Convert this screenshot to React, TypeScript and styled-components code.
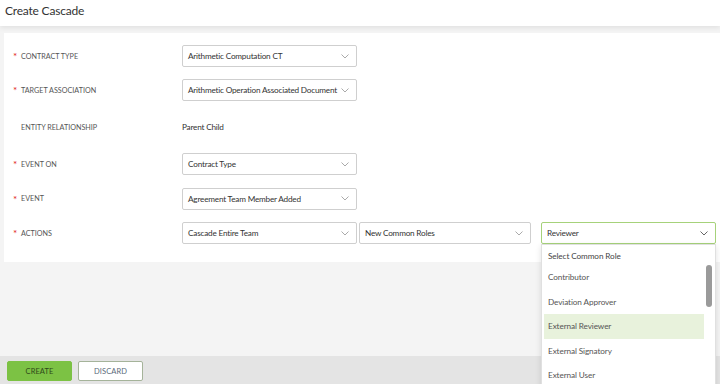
import styled, { createGlobalStyle } from "styled-components";

const GlobalStyle = createGlobalStyle`
  html, body {
    margin: 0;
    padding: 0;
    background: #f4f4f4;
    font-family: Lato, "Noto Sans", sans-serif;
    color: #333;
  }
`;

const Page = styled.div`
  width: 720px;
  height: 384px;
  display: flex;
  flex-direction: column;
  overflow: hidden;
  background: #f4f4f4;
`;

const Header = styled.div`
  height: 26px;
  box-sizing: border-box;
  background: #fff;
  display: flex;
  align-items: center;
  padding: 0 5px 6px;
  font-size: 12px;
  letter-spacing: -0.2px;
  color: #333;
  box-shadow: 0 2px 5px rgba(0, 0, 0, 0.08);
  position: relative;
  z-index: 1;
  flex-shrink: 0;
`;

const Body = styled.div`
  flex: 1;
  padding: 7px 0 0 4px;
`;

const Card = styled.div`
  background: #fff;
  padding: 6px 0 12px 0;
  display: flex;
  flex-direction: column;
`;

const Row = styled.div<{ h: number }>`
  display: grid;
  grid-template-columns: 178px auto;
  align-items: center;
  height: ${({ h }) => h}px;
`;

const Label = styled.div`
  display: flex;
  align-items: center;
  padding-left: 9px;
  font-size: 7.2px;
  color: #555;
  text-transform: uppercase;
`;

const Star = styled.span<{ show?: boolean }>`
  color: #e2231a;
  width: 8px;
  font-size: 10px;
  line-height: 1;
  visibility: ${({ show }) => (show ? "visible" : "hidden")};
`;

const Controls = styled.div`
  display: flex;
  align-items: center;
`;

const SelectBox = styled.div<{ w: number; active?: boolean; gap?: number }>`
  width: ${({ w }) => w}px;
  height: 22px;
  box-sizing: border-box;
  border: 1px solid ${({ active }) => (active ? "#a6d27a" : "#cfcfcf")};
  border-radius: 2px;
  display: flex;
  align-items: center;
  justify-content: space-between;
  padding: 0 7px 0 5px;
  margin-right: ${({ gap }) => gap ?? 0}px;
  font-size: 8.2px;
  letter-spacing: -0.2px;
  white-space: nowrap;
  color: #333;
  background: #fff;
  position: relative;
`;

const Plain = styled.div`
  font-size: 8.2px;
  letter-spacing: -0.2px;
  color: #333;
`;

const Menu = styled.div`
  position: absolute;
  top: 21px;
  left: -1px;
  width: 175px;
  height: 150px;
  background: #fff;
  border: 1px solid #e0e0e0;
  box-shadow: 0 2px 6px rgba(0, 0, 0, 0.12);
  box-sizing: border-box;
  padding: 2px 2px 0 2px;
  z-index: 5;
  display: flex;
  letter-spacing: 0;
`;

const MenuList = styled.div`
  flex: 1;
  display: flex;
  flex-direction: column;
`;

const MenuItem = styled.div<{ hl?: boolean; head?: boolean }>`
  height: ${({ head }) => (head ? 18 : 24.5)}px;
  flex-shrink: 0;
  display: flex;
  align-items: center;
  padding-left: 4px;
  font-size: 8.2px;
  letter-spacing: -0.1px;
  color: ${({ head }) => (head ? "#444" : "#555")};
  background: ${({ hl }) => (hl ? "#e8f2dc" : "transparent")};
`;

const ScrollTrack = styled.div`
  width: 9px;
  display: flex;
  justify-content: center;
  padding-top: 18px;
  box-sizing: border-box;
`;

const Thumb = styled.div`
  width: 6px;
  height: 42px;
  border-radius: 3px;
  background: #9a9a9a;
`;

const Footer = styled.div`
  height: 28px;
  background: #e4e4e4;
  display: flex;
  align-items: center;
  gap: 6px;
  padding-left: 7px;
  flex-shrink: 0;
`;

const Button = styled.button<{ primary?: boolean }>`
  width: 65px;
  height: 20px;
  box-sizing: border-box;
  font-family: inherit;
  font-size: 7.5px;
  letter-spacing: 0.1px;
  border-radius: 2px;
  border: 1px solid ${({ primary }) => (primary ? "#7cc244" : "#a5b39a")};
  background: ${({ primary }) => (primary ? "#7cc244" : "#fff")};
  color: ${({ primary }) => (primary ? "#2f4a1a" : "#5a6a7a")};
  padding: 0;
  margin-top: 2px;
`;

const Chevron = ({ dark }: { dark?: boolean }) => (
  <svg width="8" height="5" viewBox="0 0 8 5" fill="none">
    <path
      d="M0.5 0.5 L4 4 L7.5 0.5"
      stroke={dark ? "#666" : "#aaa"}
      strokeWidth="1"
    />
  </svg>
);

const Select = ({
  value,
  w = 175,
  gap,
  active,
  children,
}: {
  value: string;
  w?: number;
  gap?: number;
  active?: boolean;
  children?: React.ReactNode;
}) => (
  <SelectBox w={w} gap={gap} active={active}>
    <span>{value}</span>
    <Chevron dark={active} />
    {children}
  </SelectBox>
);

const roles = [
  "Contributor",
  "Deviation Approver",
  "External Reviewer",
  "External Signatory",
  "External User",
];

export default function App() {
  return (
    <>
      <GlobalStyle />
      <Page>
        <Header>Create Cascade</Header>
        <Body>
          <Card>
            <Row h={34}>
              <Label>
                <Star show>*</Star>Contract Type
              </Label>
              <Controls>
                <Select value="Arithmetic Computation CT" />
              </Controls>
            </Row>
            <Row h={34}>
              <Label>
                <Star show>*</Star>Target Association
              </Label>
              <Controls>
                <Select value="Arithmetic Operation Associated Document" />
              </Controls>
            </Row>
            <Row h={40}>
              <Label>
                <Star>*</Star>Entity Relationship
              </Label>
              <Plain>Parent Child</Plain>
            </Row>
            <Row h={34}>
              <Label>
                <Star show>*</Star>Event On
              </Label>
              <Controls>
                <Select value="Contract Type" />
              </Controls>
            </Row>
            <Row h={35}>
              <Label>
                <Star show>*</Star>Event
              </Label>
              <Controls>
                <Select value="Agreement Team Member Added" />
              </Controls>
            </Row>
            <Row h={34}>
              <Label>
                <Star show>*</Star>Actions
              </Label>
              <Controls>
                <Select value="Cascade Entire Team" gap={2} />
                <Select value="New Common Roles" w={172} gap={10} />
                <Select value="Reviewer" active>
                  <Menu>
                    <MenuList>
                      <MenuItem head>Select Common Role</MenuItem>
                      {roles.map((r) => (
                        <MenuItem key={r} hl={r === "External Reviewer"}>
                          {r}
                        </MenuItem>
                      ))}
                    </MenuList>
                    <ScrollTrack>
                      <Thumb />
                    </ScrollTrack>
                  </Menu>
                </Select>
              </Controls>
            </Row>
          </Card>
        </Body>
        <Footer>
          <Button primary>CREATE</Button>
          <Button>DISCARD</Button>
        </Footer>
      </Page>
    </>
  );
}
